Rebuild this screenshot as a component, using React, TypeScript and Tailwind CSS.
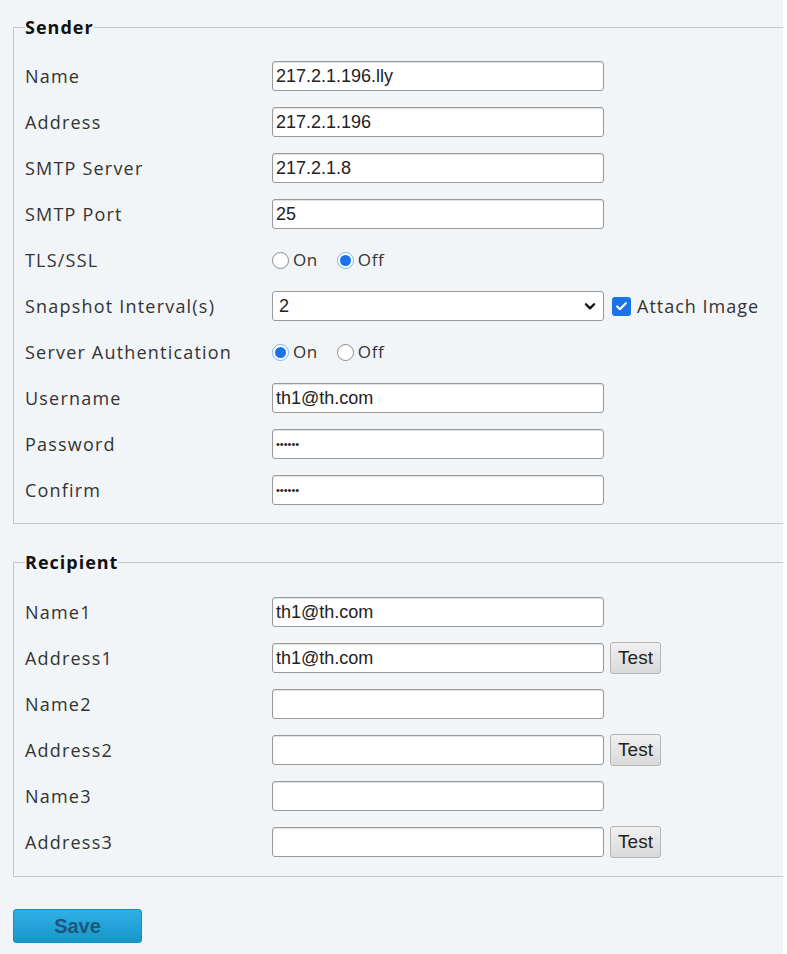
import React from 'react';

const labelFont = { fontFamily: '"Open Sans", "Noto Sans", sans-serif' };

function TextBox({ value = '', type = 'text' }: { value?: string; type?: string }) {
  return (
    <div className="w-[332px] h-[30px] bg-white border border-[#9a9a9a] rounded-[3px] shadow-[inset_0_1px_1px_rgba(0,0,0,0.12)] flex items-center px-[3px] text-[18px] text-[#222] font-['Liberation_Sans',Arial,sans-serif]">
      {type === 'password' ? <span className="text-[11px] leading-none">••••••</span> : value}
    </div>
  );
}

function Radio({ checked }: { checked?: boolean }) {
  return checked ? (
    <span className="w-[17px] h-[17px] rounded-full border border-[#7fb2f0] bg-white flex items-center justify-center">
      <span className="w-[11px] h-[11px] rounded-full bg-[#1a73e8]" />
    </span>
  ) : (
    <span className="w-[17px] h-[17px] rounded-full border border-[#8a8a8a] bg-white" />
  );
}

function RadioPair({ on }: { on: boolean }) {
  return (
    <div className="flex items-center text-[17px] tracking-[0.6px] text-[#333]" style={labelFont}>
      <Radio checked={on} />
      <span className="ml-[4px] mr-[19px]">On</span>
      <Radio checked={!on} />
      <span className="ml-[4px]">Off</span>
    </div>
  );
}

function TestButton() {
  return (
    <button className="ml-[6px] w-[51px] h-[32px] rounded-[3px] border border-[#b4b4b4] bg-gradient-to-b from-[#f0f0f0] to-[#d9d9d9] text-[19px] text-[#222] font-['Liberation_Sans',Arial,sans-serif]">
      Test
    </button>
  );
}

function Row({ label, children }: { label: string; children: React.ReactNode }) {
  return (
    <div className="flex items-center h-[46px]">
      <div className="w-[247px] text-[18px] tracking-[1.2px] text-[#333]" style={labelFont}>
        {label}
      </div>
      {children}
    </div>
  );
}

function Group({ title, children }: { title: string; children: React.ReactNode }) {
  return (
    <fieldset className="border border-r-0 border-[#c4c6c8] pl-[11px] w-[770px]">
      <legend className="text-[18px] font-bold tracking-[1px] text-[#111] leading-[20px]" style={labelFont}>
        {title}
      </legend>
      {children}
    </fieldset>
  );
}

export default function App() {
  return (
    <div className="w-[783px] min-h-[954px] bg-[#f2f5f8] pl-[13px] pt-[17px] overflow-hidden">
      <Group title="Sender">
        <div className="pt-[16px] pb-[10px]">
          <Row label="Name"><TextBox value="217.2.1.196.lly" /></Row>
          <Row label="Address"><TextBox value="217.2.1.196" /></Row>
          <Row label="SMTP Server"><TextBox value="217.2.1.8" /></Row>
          <Row label="SMTP Port"><TextBox value="25" /></Row>
          <Row label="TLS/SSL"><RadioPair on={false} /></Row>
          <Row label="Snapshot Interval(s)">
            <div className="w-[332px] h-[30px] bg-white border border-[#9a9a9a] rounded-[3px] flex items-center justify-between pl-[6px] pr-[6px] text-[18px] text-[#222] font-['Liberation_Sans',Arial,sans-serif]">
              <span>2</span>
              <svg width="14" height="14" viewBox="0 0 24 24" fill="none" stroke="#111" strokeWidth="4" strokeLinecap="round" strokeLinejoin="round">
                <path d="M5 9l7 7 7-7" />
              </svg>
            </div>
            <span className="ml-[8px] w-[19px] h-[19px] rounded-[3px] bg-[#1a73e8] flex items-center justify-center">
              <svg width="13" height="13" viewBox="0 0 24 24" fill="none" stroke="#fff" strokeWidth="4" strokeLinecap="round" strokeLinejoin="round">
                <path d="M4 12l5 5 11-11" />
              </svg>
            </span>
            <span className="ml-[6px] text-[18px] tracking-[1px] text-[#333]" style={labelFont}>Attach Image</span>
          </Row>
          <Row label="Server Authentication"><RadioPair on={true} /></Row>
          <Row label="Username"><TextBox value="th1@th.com" /></Row>
          <Row label="Password"><TextBox type="password" /></Row>
          <Row label="Confirm"><TextBox type="password" /></Row>
        </div>
      </Group>

      <div className="h-[28px]" />

      <Group title="Recipient">
        <div className="pt-[17px] pb-[11px]">
          <Row label="Name1"><TextBox value="th1@th.com" /></Row>
          <Row label="Address1"><TextBox value="th1@th.com" /><TestButton /></Row>
          <Row label="Name2"><TextBox /></Row>
          <Row label="Address2"><TextBox /><TestButton /></Row>
          <Row label="Name3"><TextBox /></Row>
          <Row label="Address3"><TextBox /><TestButton /></Row>
        </div>
      </Group>

      <button className="mt-[32px] w-[129px] h-[34px] rounded-[3px] bg-gradient-to-b from-[#2eb0e4] to-[#1896cc] border border-[#1a8cc0] text-[20px] font-bold text-[#1d5680] font-['Liberation_Sans',Arial,sans-serif]">
        Save
      </button>
    </div>
  );
}
